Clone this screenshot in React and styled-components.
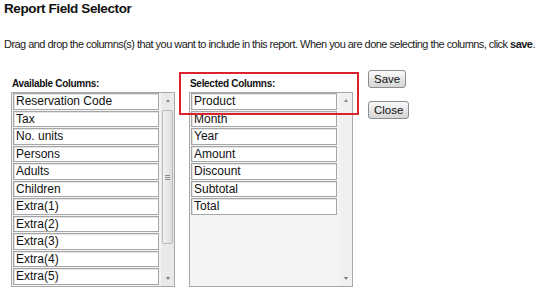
import React from "react";
import styled, { createGlobalStyle } from "styled-components";

const available = [
  "Reservation Code",
  "Tax",
  "No. units",
  "Persons",
  "Adults",
  "Children",
  "Extra(1)",
  "Extra(2)",
  "Extra(3)",
  "Extra(4)",
  "Extra(5)"
];

const selected = ["Product", "Month", "Year", "Amount", "Discount", "Subtotal", "Total"];

const GlobalStyle = createGlobalStyle`
  body {
    margin: 0;
    background: #fff;
    font-family: "Liberation Sans", Arial, sans-serif;
    color: #111;
  }
`;

const Page = styled.div`
  width: 538px;
  height: 289px;
  overflow: hidden;
  padding: 0 0 0 4px;
  box-sizing: border-box;
`;

const Title = styled.h1`
  margin: 0;
  font-size: 13.5px;
  line-height: 17px;
  font-weight: bold;
  letter-spacing: -0.4px;
  color: #111;
`;

const Intro = styled.p`
  margin: 20px 0 0;
  font-size: 11px;
  line-height: 14px;
  letter-spacing: -0.54px;
  white-space: nowrap;
  color: #1a1a1a;

  b {
    font-weight: bold;
  }
`;

const Columns = styled.div`
  display: flex;
  align-items: flex-start;
  margin-top: 19px;
  padding-left: 7px;
`;

const Column = styled.div`
  position: relative;
  width: 164px;
  margin-right: ${props => props.$gap}px;
`;

const Label = styled.div`
  margin: 7px 0 1px 1px;
  font-size: 10px;
  line-height: 14px;
  font-weight: bold;
  letter-spacing: -0.3px;
  color: #111;
`;

const ListBox = styled.div`
  display: flex;
  height: 195px;
  border: 1px solid #a9a9a9;
  background: #f4f4f4;
  box-sizing: border-box;
  overflow: hidden;
`;

const Items = styled.div`
  flex: 1;
  padding: 0 1px;
`;

const Item = styled.div`
  height: 16.5px;
  margin-bottom: 1px;
  padding-left: 2px;
  border: 1px solid #a6a6a6;
  box-shadow: inset 1px 1px 0 #e4e4e4;
  background: #fff;
  font-size: 12px;
  line-height: 15px;
  color: #111;
  box-sizing: border-box;
  white-space: nowrap;
`;

const ScrollBar = styled.div`
  width: 13px;
  display: flex;
  flex-direction: column;
  background: ${props => (props.$active ? "#e9e9e9" : "#f0f0f0")};
  border-left: 1px solid ${props => (props.$active ? "#f4f4f4" : "#f6f6f6")};
`;

const Arrow = styled.div`
  height: 15px;
  display: flex;
  align-items: center;
  justify-content: center;

  &::before {
    content: "";
    border-left: 2.5px solid transparent;
    border-right: 2.5px solid transparent;
    ${props =>
      props.$down
        ? "border-top: 3px solid #777;"
        : "border-bottom: 3px solid #888;"}
  }
`;

const Track = styled.div`
  flex: 1;
  padding: 2px 0;
`;

const Thumb = styled.div`
  height: 134px;
  margin: 0 1px;
  border: 1px solid #b9b9b9;
  border-radius: 2px;
  background: linear-gradient(to right, #f3f3f3, #dcdcdc);
  display: flex;
  align-items: center;
  justify-content: center;
  box-sizing: border-box;
`;

const Grip = styled.div`
  width: 5px;
  height: 5px;
  background: repeating-linear-gradient(to bottom, #8a8a8a 0 1px, transparent 1px 2px);
`;

const Highlight = styled.div`
  position: absolute;
  left: -10px;
  top: 2px;
  width: 180px;
  height: 43px;
  border: 2px solid #d9232e;
  box-sizing: border-box;
  pointer-events: none;
`;

const Buttons = styled.div`
  display: flex;
  flex-direction: column;
  align-items: flex-start;
  gap: 13px;
`;

const Button = styled.button`
  height: 18px;
  padding: 0 5px;
  border: 1px solid #8c8c8c;
  border-radius: 3px;
  background: linear-gradient(to bottom, #fbfbfb, #e2e2e2 60%, #d6d6d6);
  font-family: "Liberation Sans", Arial, sans-serif;
  font-size: 11.5px;
  line-height: 16px;
  color: #111;
  cursor: pointer;
`;

function ColumnList({ items, thumb }) {
  return (
    <ListBox>
      <Items>
        {items.map(name => (
          <Item key={name}>{name}</Item>
        ))}
      </Items>
      <ScrollBar $active={thumb}>
        <Arrow />
        <Track>
          {thumb && (
            <Thumb>
              <Grip />
            </Thumb>
          )}
        </Track>
        <Arrow $down />
      </ScrollBar>
    </ListBox>
  );
}

export default function App() {
  return (
    <Page>
      <GlobalStyle />
      <Title>Report Field Selector</Title>
      <Intro>
        Drag and drop the columns(s) that you want to include in this report. When you are done selecting the columns,
        click <b>save</b>.
      </Intro>
      <Columns>
        <Column $gap={14}>
          <Label>Available Columns:</Label>
          <ColumnList items={available} thumb />
        </Column>
        <Column $gap={15}>
          <Label>Selected Columns:</Label>
          <ColumnList items={selected} />
          <Highlight />
        </Column>
        <Buttons>
          <Button type="button">Save</Button>
          <Button type="button">Close</Button>
        </Buttons>
      </Columns>
    </Page>
  );
}
